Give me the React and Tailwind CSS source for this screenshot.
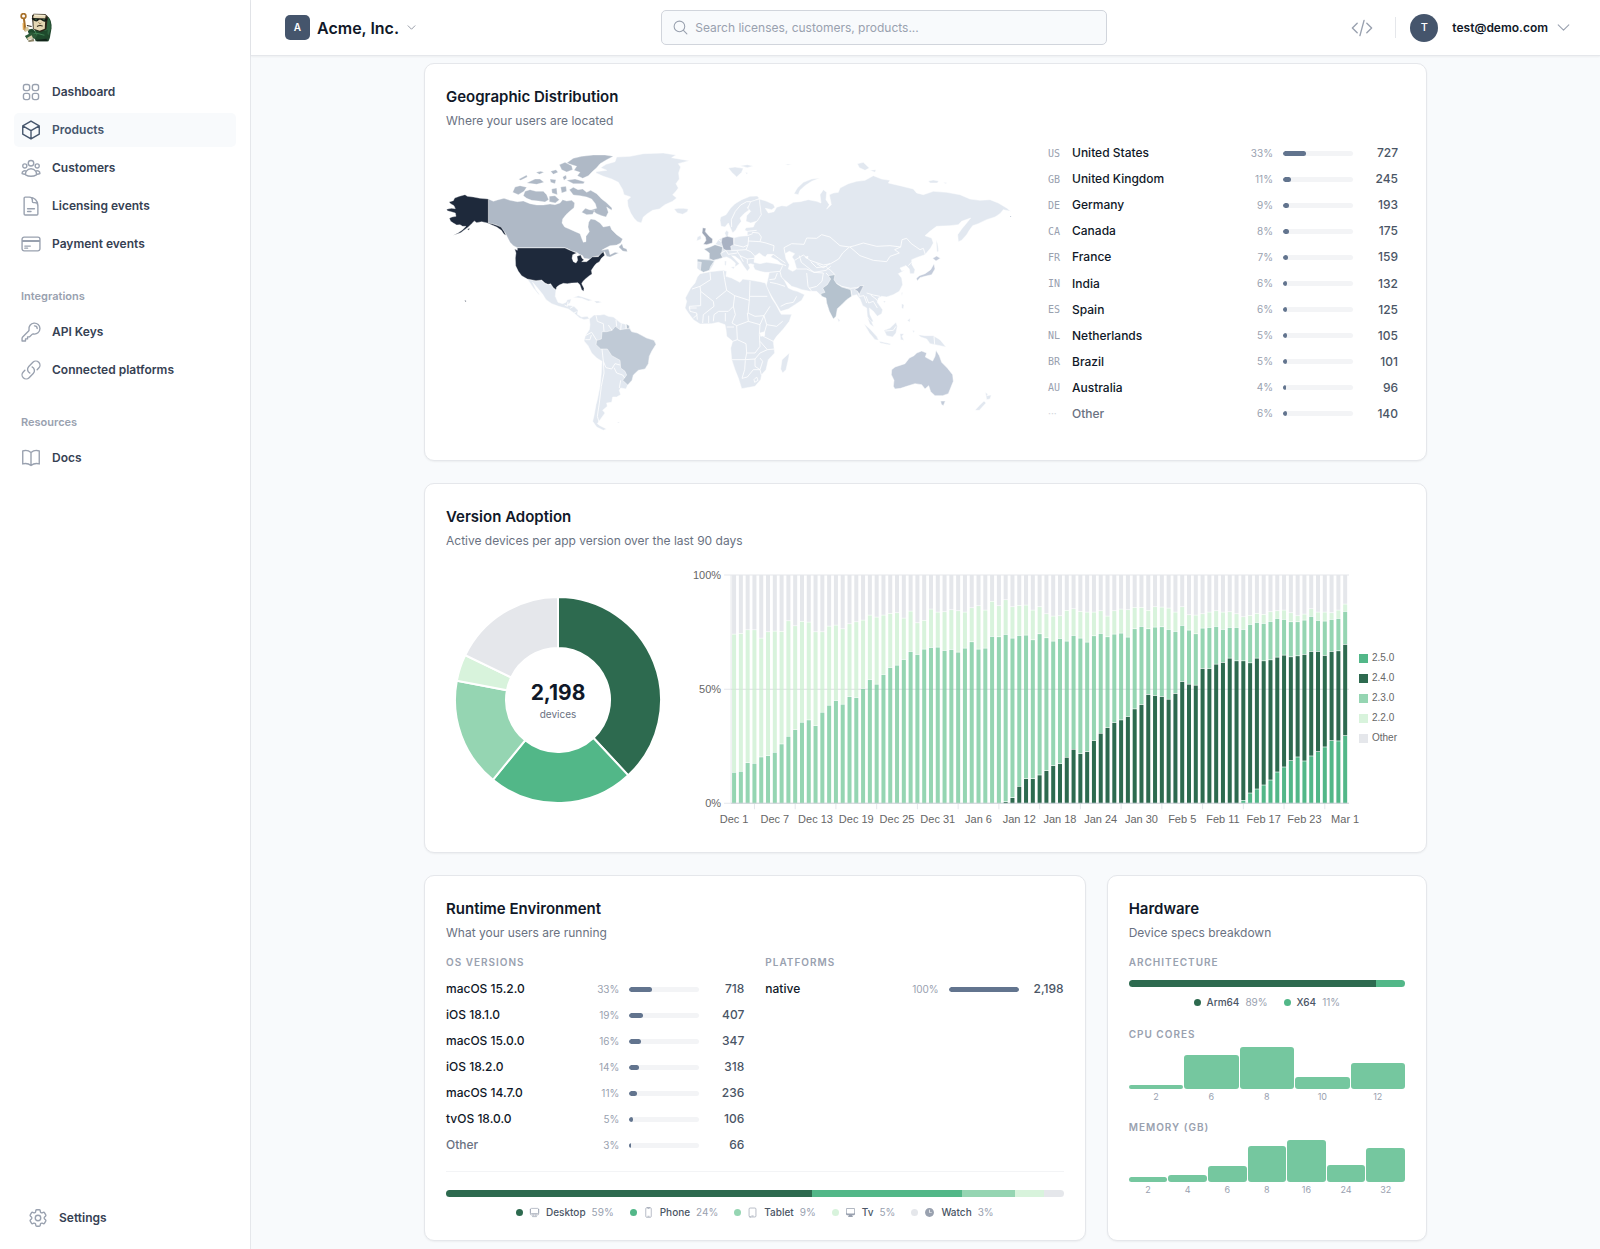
import React from "react";
import {
  HiOutlineSquares2X2,
  HiOutlineCube,
  HiOutlineUserGroup,
  HiOutlineDocumentText,
  HiOutlineCreditCard,
  HiOutlineKey,
  HiOutlineLink,
  HiOutlineBookOpen,
  HiOutlineCog6Tooth,
  HiOutlineMagnifyingGlass,
  HiOutlineCodeBracket,
  HiOutlineChevronDown,
  HiOutlineComputerDesktop,
  HiOutlineDevicePhoneMobile,
  HiOutlineDeviceTablet,
  HiComputerDesktop,
  HiClock,
} from "react-icons/hi2";

const mainNav = [
  { label: "Dashboard", Icon: HiOutlineSquares2X2 },
  { label: "Products", Icon: HiOutlineCube, active: true },
  { label: "Customers", Icon: HiOutlineUserGroup },
  { label: "Licensing events", Icon: HiOutlineDocumentText },
  { label: "Payment events", Icon: HiOutlineCreditCard },
];
const integrationNav = [
  { label: "API Keys", Icon: HiOutlineKey },
  { label: "Connected platforms", Icon: HiOutlineLink },
];
const resourceNav = [{ label: "Docs", Icon: HiOutlineBookOpen }];

const countries = [
  { code: "US", name: "United States", pct: 33, value: "727" },
  { code: "GB", name: "United Kingdom", pct: 11, value: "245" },
  { code: "DE", name: "Germany", pct: 9, value: "193" },
  { code: "CA", name: "Canada", pct: 8, value: "175" },
  { code: "FR", name: "France", pct: 7, value: "159" },
  { code: "IN", name: "India", pct: 6, value: "132" },
  { code: "ES", name: "Spain", pct: 6, value: "125" },
  { code: "NL", name: "Netherlands", pct: 5, value: "105" },
  { code: "BR", name: "Brazil", pct: 5, value: "101" },
  { code: "AU", name: "Australia", pct: 4, value: "96" },
  { code: "···", name: "Other", pct: 6, value: "140" },
];
const osVersions = [
  { name: "macOS 15.2.0", pct: 33, value: "718" },
  { name: "iOS 18.1.0", pct: 19, value: "407" },
  { name: "macOS 15.0.0", pct: 16, value: "347" },
  { name: "iOS 18.2.0", pct: 14, value: "318" },
  { name: "macOS 14.7.0", pct: 11, value: "236" },
  { name: "tvOS 18.0.0", pct: 5, value: "106" },
  { name: "Other", pct: 3, value: "66" },
];
const platforms = [{ name: "native", pct: 100, value: "2,198" }];

const devices = [
  { name: "Desktop", pct: 59, share: 59.2, color: "#2d6a4f", Icon: HiOutlineComputerDesktop },
  { name: "Phone", pct: 24, share: 24.4, color: "#52b788", Icon: HiOutlineDevicePhoneMobile },
  { name: "Tablet", pct: 9, share: 8.6, color: "#95d5b2", Icon: HiOutlineDeviceTablet },
  { name: "Tv", pct: 5, share: 4.7, color: "#d8f3dc", Icon: HiComputerDesktop },
  { name: "Watch", pct: 3, share: 3.1, color: "#e5e7eb", Icon: HiClock },
];
const architectures = [
  { name: "Arm64", pct: 89, share: 89.4, color: "#2d6a4f" },
  { name: "X64", pct: 11, share: 10.6, color: "#52b788" },
];
const cpuCores = [["2", 10], ["6", 83], ["8", 100], ["10", 30], ["12", 64]];
const memory = [["2", 12], ["4", 18], ["6", 38], ["8", 87], ["16", 100], ["24", 41], ["32", 83]];

function Logo() {
  return (
    <svg viewBox="0 0 94 86" className="h-[29px] w-[32px]" aria-label="Home" role="img">
      <path d="M58 6 L84 12 Q94 22 93 45 L88 74 L84 84 L46 84 L40 66Z" fill="#20452c" />
      <path d="M66 12 L84 15 Q92 30 90 48 L84 66 L72 52Z" fill="#2f6540" />
      <path d="M35 8 L40 2 L74 3 L82 10 L78 48 L60 56 L38 48Z" fill="#2b2518" />
      <path d="M39 8 L75 9 L73 47 L58 53 L40 47Z" fill="#e4d7b4" />
      <path d="M39 4 L73 5 L78 10 L42 9Z" fill="#f3ead0" />
      <path d="M34 15 L82 16 L80 22 Q74 28 67 24 L61 20 L56 20 Q52 27 43 24 L37 20Z" fill="#141a14" />
      <path d="M42 18 l8 1 -2 3z M66 18 l8 1 -3 3z" fill="#3f7a4f" />
      <path d="M50 40 Q58 35 67 39" fill="none" stroke="#2b2518" strokeWidth="3" />
      <path d="M54 27 l5 6 4-4" fill="none" stroke="#8a6b3f" strokeWidth="2" />
      <path d="M22 50 L36 47 L42 52 L64 58 L82 50 L80 72 L58 78 L30 72 L24 58Z" fill="#1e4a2c" />
      <path d="M28 60 L52 61 L72 66 M44 53 L50 66" stroke="#3f7f52" strokeWidth="3" fill="none" />
      <path d="M14 68 L34 58 L52 66 L44 76 L28 74 L22 80Z" fill="#2c5a38" />
      <circle cx="10" cy="9" r="7" fill="none" stroke="#a8712b" strokeWidth="5" />
      <path d="M11 16 L16 54" stroke="#a8712b" strokeWidth="6" />
      <path d="M9 30 L10 50" stroke="#e0a64d" strokeWidth="4" />
      <path d="M16 42 L24 40 L26 52 L14 56Z" fill="#d9cba5" />
      <path d="M20 37 L34 40" stroke="#2b2518" strokeWidth="3" />
      <path d="M20 74 L34 66 L38 74 L24 80Z" fill="#d8ccaa" />
      <path d="M22 82 L40 76 L42 84 L26 86Z" fill="#8c8468" />
      <path d="M48 80 L78 76 L82 84 L50 84Z" fill="#12241a" />
    </svg>
  );
}

function NavLink({ label, Icon, active }) {
  return (
    <li>
      <a
        href="#"
        aria-current={active ? "page" : undefined}
        className={
          active
            ? "flex h-[34px] items-center gap-2.5 rounded-[5px] bg-slate-50 px-1.5 text-[12px] font-semibold text-slate-600"
            : "flex h-[34px] items-center gap-2.5 rounded-[5px] px-1.5 text-[12px] font-semibold text-gray-700"
        }
      >
        <Icon className={active ? "size-[22px] text-slate-600" : "size-[22px] text-gray-400"} />
        {label}
      </a>
    </li>
  );
}

function NavSection({ title, items }) {
  return (
    <section>
      <h2 className="px-[7px] text-[11px] leading-4 font-semibold text-gray-400">{title}</h2>
      <ul className="mt-[11px] flex flex-col gap-1">
        {items.map((item) => (
          <NavLink key={item.label} {...item} />
        ))}
      </ul>
    </section>
  );
}

function Sidebar() {
  return (
    <aside className="flex w-[251px] shrink-0 flex-col border-r border-gray-200 bg-white px-3.5 pb-3.5">
      <a href="#" className="mt-[13px] ml-1.5 self-start">
        <Logo />
      </a>
      <nav className="mt-[33px] flex flex-1 flex-col gap-[27px]">
        <ul className="flex flex-col gap-1">
          {mainNav.map((item) => (
            <NavLink key={item.label} {...item} />
          ))}
        </ul>
        <NavSection title="Integrations" items={integrationNav} />
        <NavSection title="Resources" items={resourceNav} />
      </nav>
      <a href="#" className="flex h-[34px] items-center gap-2.5 px-[13px] text-[12px] font-semibold text-gray-700">
        <HiOutlineCog6Tooth className="size-[22px] text-gray-400" />
        Settings
      </a>
    </aside>
  );
}

function Header() {
  return (
    <header className="flex h-14 items-center justify-between border-b border-gray-200 bg-white pr-7 pl-[34px] shadow-xs">
      <button type="button" className="flex items-center gap-[7px] text-gray-900">
        <span className="flex size-[25px] items-center justify-center rounded-[5px] bg-slate-600 text-[10px] font-semibold text-white">
          A
        </span>
        <span className="text-base font-semibold">Acme, Inc.</span>
        <HiOutlineChevronDown className="size-[11px] text-gray-500" />
      </button>
      <div className="flex h-[35px] w-[446px] items-center gap-1.5 rounded-[5px] border border-gray-300 bg-slate-50 px-2.5">
        <HiOutlineMagnifyingGlass className="size-[17px] shrink-0 text-gray-400" />
        <input
          type="search"
          aria-label="Search"
          placeholder="Search licenses, customers, products..."
          className="h-full w-full bg-transparent text-[12px] leading-5 text-gray-900 outline-none placeholder:text-gray-400"
        />
      </div>
      <div className="flex items-center">
        <a href="#" aria-label="Developer tools" className="text-gray-400">
          <HiOutlineCodeBracket className="size-[22px]" />
        </a>
        <span className="ml-[22px] h-[21px] w-px bg-gray-200" />
        <button type="button" className="ml-3.5 flex items-center text-[12px] font-semibold text-gray-900">
          <span className="flex size-7 items-center justify-center rounded-full bg-slate-600 text-[11px] font-medium text-white">
            T
          </span>
          <span className="ml-3.5">test@demo.com</span>
          <HiOutlineChevronDown className="ml-[7px] size-[17px] text-gray-400" />
        </button>
      </div>
    </header>
  );
}

function Card({ title, subtitle, className = "", children }) {
  return (
    <section className={"rounded-[10px] border border-gray-200 bg-white px-[21px] pt-[22px] pb-5 shadow-xs " + className}>
      <h2 className="text-[15px] leading-[22px] font-semibold text-gray-900">{title}</h2>
      <p className="mt-1 text-[12px] leading-[18px] text-gray-500">{subtitle}</p>
      {children}
    </section>
  );
}

function BreakdownRow({ code, name, pct, value }) {
  const muted = name === "Other";
  return (
    <li className="flex flex-1 items-center text-[12px]">
      {code && (
        <span
          className={
            muted
              ? "w-6 text-[10px] text-gray-300"
              : "w-6 font-['DejaVu_Sans_Mono',monospace] text-[10px] text-gray-400"
          }
        >
          {code}
        </span>
      )}
      <span className={muted ? "flex-1 font-medium text-gray-500" : "flex-1 font-medium text-gray-900"}>{name}</span>
      <span className="text-[10px] text-gray-400">{pct}%</span>
      <span className="ml-2.5 h-[5px] w-[70px] overflow-hidden rounded-full bg-gray-100">
        <span className="block h-full rounded-full bg-slate-500" style={{ width: `${pct}%` }} />
      </span>
      <span className="w-[45px] text-right font-medium text-gray-600">{value}</span>
    </li>
  );
}

function SectionLabel({ children }) {
  return <h3 className="text-[10px] leading-4 font-semibold tracking-widest text-gray-400">{children}</h3>;
}

/* Country outlines in a Miller projection; the eastern half is drawn in its own group. */
const WEST_LAND = [
  // Greenland, Iceland
  "M498,96 530,92 512,84 528,74 555,66 560,52 600,50 640,42 700,40 738,46 725,54 778,63 745,72 752,82 746,100 748,118 738,132 745,145 738,155 728,165 740,175 728,185 705,195 688,208 668,212 652,222 640,232 634,250 622,246 612,236 602,220 594,200 592,182 602,172 582,165 578,150 565,128 545,118 520,110 498,100Z",
  "M732,208 745,206 760,206 775,208 772,216 758,224 742,220Z",
  // Mexico and Central America
  "M292,418 318,424 335,422 345,431 354,435 362,433 370,445 378,451 376,470 384,488 398,492 408,488 412,480 424,478 420,490 412,496 432,500 444,512 442,524 455,532 472,530 478,537 462,540 448,534 432,520 415,508 386,500 365,492 348,480 338,464 322,444 308,428 318,450 330,466 325,464 310,445 300,430Z",
  "M428,474 445,468 465,474 488,482 475,484 455,476 440,474Z",
  "M492,484 505,484 516,488 500,491Z",
  // South America
  "M478,538 492,526 510,526 522,524 535,530 550,532 558,538 572,550 595,556 605,575 622,580 650,595 672,602 678,614 665,635 658,650 655,672 645,688 625,692 610,706 606,722 593,736 588,748 572,745 568,752 572,765 560,772 548,772 545,788 530,790 532,800 518,812 525,820 512,838 502,852 510,858 530,868 520,872 500,862 488,845 492,828 498,795 502,780 510,740 514,700 516,665 500,655 485,640 474,618 462,604 466,588 478,570 480,555Z",
  "M560,847 570,847 566,850Z",
];
const CANADA = [
  "M175,178 190,185 205,180 222,176 240,182 262,186 280,184 300,192 320,196 340,196 360,193 375,195 390,190 398,180 410,184 425,182 434,190 432,204 420,214 408,225 398,238 396,250 404,262 418,268 436,276 450,282 455,296 460,308 468,306 468,290 478,276 474,262 476,248 482,238 495,240 510,250 520,262 540,258 545,270 560,285 578,298 572,310 560,316 540,318 525,326 515,332 535,328 538,336 540,345 555,338 566,340 540,352 530,350 524,336 515,340 508,348 490,352 478,358 462,356 458,348 448,344 440,338 425,334 415,328 405,324 262,324 250,318 240,308 232,292 226,280 215,266 200,256 175,250Z",
  "M566,322 576,312 580,324 590,328 592,336 578,334Z",
  "M418,150 430,143 444,150 458,148 470,158 482,152 500,162 515,178 528,188 546,205 545,212 530,202 535,218 528,232 515,228 500,222 492,216 484,210 500,206 496,192 485,178 470,172 450,168 430,166Z",
  "M285,155 300,150 318,155 340,155 350,165 356,180 345,187 325,184 305,182 290,176 280,168Z",
  "M255,142 270,138 290,143 282,155 265,165 248,158Z",
  "M410,70 430,56 455,50 490,46 525,46 550,50 530,60 510,72 500,84 488,95 475,108 458,116 442,108 450,98 432,92 440,80 425,75Z",
  "M388,75 405,68 425,78 428,90 410,97 395,90Z",
  "M410,122 435,118 464,126 460,132 430,132Z",
  "M360,118 378,120 375,132 362,128Z",
  "M290,130 315,118 330,118 342,128 320,134Z",
  "M266,119 290,106 292,112 272,122Z",
  "M318,98 332,95 342,98 328,104Z",
  "M362,95 378,90 384,98 370,104Z",
  "M392,142 408,140 410,155 395,160Z",
  "M365,148 380,145 382,165 366,160Z",
  "M358,170 375,168 388,180 376,190 358,186Z",
  "M455,218 466,206 478,210 494,212 488,224 470,225Z",
  "M398,112 408,106 410,116 402,122Z",
];
const USA = [
  "M57,187 70,183 74,175 88,170 105,165 112,170 130,172 150,176 175,178 175,250 186,252 200,257 213,262 222,275 228,287 222,284 214,272 200,262 186,256 172,250 155,246 140,249 133,244 125,252 115,262 104,270 92,279 70,287 85,279 98,270 108,260 98,260 90,255 80,256 70,250 62,245 58,236 66,232 78,230 76,220 66,217 52,213 50,209 64,206 76,207 72,198 62,192Z",
  "M112,268 120,266 116,272Z",
  "M262,325 405,325 418,331 430,336 440,340 428,345 426,356 430,366 438,370 443,362 441,350 452,346 456,356 462,360 455,366 470,366 480,358 487,352 505,351 512,343 520,336 524,347 514,356 508,366 498,372 492,380 484,392 486,403 478,408 466,418 458,426 455,432 462,446 461,455 455,450 450,436 444,429 425,430 412,432 400,431 388,436 380,442 378,450 370,444 362,432 354,434 345,430 335,421 318,423 292,418 275,408 265,395 257,378 256,355 258,340 254,328 262,332Z",
  "M104,482 109,484 106,487Z",
];
const BRAZIL =
  "M546,572 556,560 570,570 598,566 605,576 622,580 650,595 672,602 678,614 665,635 658,650 655,672 645,688 625,692 610,706 606,722 593,736 578,722 590,706 585,695 572,685 570,662 545,648 532,628 512,628 498,615 500,602 514,598 516,576 530,576Z";
const WEST_BORDERS =
  "M498,527 502,545 520,552 522,575 M535,556 546,572 M558,540 560,560 M574,552 572,570 M588,555 588,568 M466,588 485,578 500,602 M466,600 480,600 484,586 M516,628 520,665 528,684 545,688 555,672 570,676 M520,665 522,700 514,740 508,790 502,830 510,856 M552,684 560,700 578,706 584,715 M572,722 568,745 M404,496 412,500 414,486 M420,506 430,500 M440,516 432,520";
const EAST_LAND = [
  // Scandinavia and Finland
  "M180,242 182,232 198,225 212,205 225,192 245,180 270,170 292,169 298,176 285,182 272,186 268,196 262,204 268,210 252,222 240,235 244,245 234,258 228,270 218,280 210,262 205,250 195,262 183,260Z",
  "M268,196 272,186 285,182 298,178 300,195 304,225 292,244 272,250 258,245 260,228 272,215 264,206Z",
  // Mainland Eurasia
  "M298,178 318,184 340,194 345,203 335,210 316,206 325,220 342,216 350,203 365,198 380,200 400,188 420,186 445,180 470,185 483,190 480,165 490,150 500,158 498,180 508,195 500,208 514,195 508,165 520,160 535,158 540,145 565,132 590,125 615,122 640,108 665,118 690,122 685,130 720,138 760,148 770,160 790,165 820,155 860,158 900,165 930,178 960,182 990,180 1015,190 1040,205 1052,215 1030,210 1020,222 1005,232 980,240 955,252 938,258 928,272 920,285 905,302 895,306 893,285 905,268 920,250 932,235 905,245 895,255 870,258 830,260 810,275 795,288 815,295 820,310 812,325 795,345 775,352 755,360 756,375 765,390 762,402 750,402 748,388 738,378 720,385 725,393 734,392 715,402 725,415 728,435 718,455 700,465 680,472 665,470 655,475 652,488 668,510 665,522 652,530 640,515 628,505 630,525 640,545 632,550 622,530 620,505 608,498 600,478 590,465 572,470 560,480 545,495 532,507 528,530 520,538 508,515 500,490 498,475 485,470 470,455 450,455 425,450 412,445 395,440 382,428 372,420 385,445 400,452 412,455 434,465 425,482 405,495 385,508 362,515 350,495 335,470 318,440 322,425 328,398 315,398 300,395 285,390 280,380 282,375 272,372 265,374 270,385 262,395 250,378 240,362 225,350 215,348 228,362 238,372 225,382 226,370 212,358 200,352 188,354 180,358 165,362 160,375 150,392 130,398 118,392 111,386 112,358 146,359 148,340 132,328 150,322 165,315 175,300 186,295 198,290 194,280 200,272 206,278 204,290 222,294 240,290 262,288 262,275 254,272 258,264 280,262 285,250 292,244 304,225Z",
  // Ireland
  "M112,292 122,287 124,298 110,304Z",
  // Arctic islands
  "M402,162 412,145 430,128 455,118 480,115 455,125 435,138 420,152 415,165Z",
  "M205,85 225,82 250,86 245,98 230,112 215,98Z",
  "M240,78 262,75 280,79 262,84Z",
  "M256,98 264,100 260,104Z",
  "M592,72 610,68 628,85 615,92 598,84Z",
  "M630,92 648,90 645,98Z",
  "M805,124 820,121 836,124 832,130 810,130Z",
  "M850,128 862,129 856,132Z",
  "M375,74 395,73 384,77Z",
  // Mediterranean islands
  "M194,364 199,364 198,378 194,376Z",
  "M212,382 224,381 221,388Z",
  // Sakhalin, Sri Lanka, Taiwan, Hainan
  "M828,300 833,312 836,334 831,338Z",
  "M532,534 540,542 536,548Z",
  "M724,460 728,458 726,468Z",
  "M670,484 677,484 673,490Z",
  // Africa and Madagascar
  "M120,402 150,396 190,392 200,395 198,410 215,415 240,428 248,418 275,422 300,426 316,430 322,445 335,475 348,495 360,518 364,524 395,524 388,545 370,568 350,590 340,605 344,640 325,660 318,690 305,705 302,720 285,740 245,747 235,715 225,690 215,660 212,625 218,605 200,590 198,570 195,555 175,548 155,552 120,553 100,540 85,520 75,505 80,485 76,475 92,445 105,430 112,412Z",
  "M388,640 386,655 378,690 368,700 362,688 366,660Z",
  // South-east Asia and Oceania
  "M612,552 630,568 650,590 656,602 645,600 628,580Z",
  "M622,535 634,545 642,562 630,554Z",
  "M658,605 692,612 690,616 660,610Z",
  "M672,572 690,565 708,548 712,560 708,580 698,592 680,588Z",
  "M720,582 732,582 726,590 732,602 722,600Z",
  "M725,492 732,495 730,508 725,505Z",
  "M742,542 751,536 749,548Z",
  "M775,585 795,588 820,588 840,600 858,622 840,618 825,615 810,612 800,598 782,592Z",
  "M758,572 764,574 760,580Z",
  "M980,768 994,766 990,778 980,780 976,758 984,764Z",
  "M972,784 978,790 958,812 945,812 960,795Z",
];
const INLAND_SEAS =
  "M282,368 284,350 298,340 308,348 316,352 322,344 340,344 332,352 352,362 368,376 350,372 320,368 300,372Z M375,342 388,335 404,342 396,352 402,360 410,388 398,395 385,388 388,375 378,358Z M300,580 314,576 314,588 302,590Z M436,352 444,350 442,358Z";
const EAST_BORDERS = [
  // Northern and Central Europe
  "M215,262 214,240 226,215 242,196 260,186 272,186 M222,294 221,315 234,318 250,322 264,316 266,292 M264,304 300,306 304,292 296,280 276,278 M262,275 290,272 M262,288 278,282 M300,306 318,310 342,318 340,335 M264,316 258,330 272,336 285,350 M212,332 230,332 258,330 M198,332 205,344 232,340 M230,332 240,348 262,358 282,356 M240,348 250,366 M262,358 262,372 M165,314 188,322 M184,340 198,332 M175,300 184,306",
  // Russia's southern edge
  "M340,344 356,356 376,370 M375,342 372,324 395,312 432,314 440,295 470,296 485,285 510,292 540,318 568,322 584,318 610,310 650,320 690,318 722,322 726,300 740,296 754,312 780,330 790,326 796,345",
  "M568,322 548,340 536,358 512,372 M570,322 600,348 640,362 680,366 690,350 718,340 704,330 722,322",
  "M404,362 430,346 450,362 490,376 512,372 M418,348 424,368 452,390 462,398 M452,366 470,384 500,380 M470,372 490,384 510,372",
  "M410,388 440,388 462,398 498,392 512,380 M440,400 444,440 455,455 M462,398 490,400 486,425 470,440 448,446 M498,400 506,408",
  "M525,405 512,392 500,384 M530,432 545,440 572,446 590,444 610,438 M572,450 576,468 M592,446 598,470 612,468 620,490 M618,470 626,490 640,485 652,505 M632,466 648,478 656,488 M620,460 640,466 660,470",
  // Middle East
  "M328,398 360,395 368,378 M362,372 378,378 M360,395 364,412 372,420 M328,420 345,418 352,400 M330,428 350,432 375,440 M362,500 378,492 400,488 M400,488 410,470 M745,388 738,378 M745,378 756,366",
  // Africa
  "M150,398 152,420 120,440 96,448 M120,440 122,455 160,485 162,500 M122,455 122,498 88,500 M190,394 194,420 200,452 168,478 M200,452 224,468 268,482 270,424 M224,468 220,500 205,515 176,515 162,525 160,545 M270,470 322,470 M268,482 264,520 285,530 312,528 330,500 M220,500 226,525 216,550 230,558 265,545 262,520 M130,525 162,500 M88,500 90,515 110,520 112,540 M130,525 128,550 M146,528 146,550 M312,528 320,555 350,560 368,545 M320,555 310,590 340,605 M265,545 300,555 312,528 M230,558 232,600 218,605 M232,600 258,612 260,640 285,640 M260,640 256,660 215,660 M256,660 285,658 300,640 322,630 M285,640 300,620 298,585 300,555 M300,605 322,630 344,628 M256,662 254,690 246,716 262,712 280,690 300,690 M285,658 285,680 300,690 308,665 300,655 M282,720 290,712 294,722 284,728Z M300,690 304,706 M200,562 222,562 M86,505 110,505 M100,535 112,525 M196,520 196,545",
  "M822,590 824,614 M676,574 700,572 708,560",
];
const GB = "M128,264 138,266 136,276 148,290 158,298 157,310 140,315 130,314 138,302 136,292 126,280Z";
const DE = "M186,295 202,290 220,294 221,315 212,320 214,332 198,332 190,328 188,322 184,308Z";
const FR = "M132,328 150,322 165,315 188,322 186,335 182,342 188,354 175,358 160,362 148,357 148,340Z";
const ES = "M112,358 150,361 163,364 152,380 148,392 130,398 121,392 124,368 112,366Z";
const IN_ =
  "M505,408 525,405 522,420 530,432 545,442 572,450 575,470 560,480 545,495 532,507 528,530 520,538 508,515 500,490 498,475 485,470 482,462 495,458 488,445 502,435 512,418Z";
const IN_EAST = "M583,450 595,444 600,438 611,438 605,450 598,464 592,454Z";
const JP = "M818,356 830,349 841,356 828,364Z M822,372 825,388 815,405 795,410 780,414 772,424 769,416 778,408 795,402 812,390Z";
const AU =
  "M695,690 705,682 735,672 748,655 762,648 770,640 785,634 800,640 796,652 818,664 825,650 828,632 838,648 845,668 862,685 878,705 880,725 865,762 848,768 825,768 812,756 806,738 795,748 785,735 765,732 740,740 722,746 705,748 700,740 702,722 694,705Z M842,784 856,784 850,798 844,794Z";

function WorldMap() {
  return (
    <svg viewBox="48 1 1719 900" className="w-full" role="img" aria-label="World map of users by country">
      <g stroke="#ffffff" strokeWidth="1.5" strokeLinejoin="round">
        <g fill="#e2e8f0">
          {WEST_LAND.map((d) => (
            <path key={d} d={d} />
          ))}
        </g>
        <g fill="#afb9c6">
          {CANADA.map((d) => (
            <path key={d} d={d} strokeWidth="1" />
          ))}
        </g>
        <path d={BRAZIL} fill="#c0cad6" />
        <path d="M588,553 598,558 597,567 590,567Z" fill="#b4bfcb" />
        <path d={WEST_BORDERS} fill="none" strokeWidth="2.5" />
        <g fill="#1e293b" strokeWidth="1">
          {USA.map((d) => (
            <path key={d} d={d} />
          ))}
        </g>
      </g>
      <g transform="translate(690 0)" stroke="#ffffff" strokeWidth="1.5" strokeLinejoin="round">
        <g fill="#e2e8f0">
          {EAST_LAND.map((d) => (
            <path key={d} d={d} />
          ))}
        </g>
        <path d={INLAND_SEAS} fill="#ffffff" />
        <g fill="none" strokeWidth="2.5">
          {EAST_BORDERS.map((d) => (
            <path key={d} d={d} />
          ))}
        </g>
        <path d={GB} fill="#9ea7b7" />
        <path d={DE} fill="#a9b2c3" />
        <path d={FR} fill="#b1bcc9" />
        <path d={ES} fill="#b9c5d1" />
        <path d={IN_} fill="#b5c2ce" />
        <path d={IN_EAST} fill="#b5bfce" />
        <path d={JP} fill="#c4ccdb" />
        <path d={AU} fill="#c2cbd9" />
        <path d="M1050,229 1054,230 1052,232Z" fill="#94a3b8" strokeWidth="0" />
      </g>
    </svg>
  );
}

const donut = [
  { from: 0, to: 137, color: "#2d6a4f" },
  { from: 137, to: 219.2, color: "#52b788" },
  { from: 219.2, to: 280.8, color: "#95d5b2" },
  { from: 280.8, to: 295.8, color: "#d8f3dc" },
  { from: 295.8, to: 360, color: "#e5e7eb" },
];

function arcPath({ from, to }) {
  const at = (r, deg) => {
    const a = ((deg - 90) * Math.PI) / 180;
    return `${(r * Math.cos(a)).toFixed(2)},${(r * Math.sin(a)).toFixed(2)}`;
  };
  const large = to - from > 180 ? 1 : 0;
  return `M${at(103, from)} A103,103 0 ${large} 1 ${at(103, to)} L${at(52, to)} A52,52 0 ${large} 0 ${at(52, from)}Z`;
}

function Donut() {
  return (
    <div className="grid w-[224px] shrink-0 place-items-center pt-1">
      <svg viewBox="-104 -104 208 208" className="col-start-1 row-start-1 w-[208px]" role="img" aria-label="Devices by version">
        {donut.map((s) => (
          <path key={s.from} d={arcPath(s)} fill={s.color} stroke="#ffffff" strokeWidth="2" />
        ))}
      </svg>
      <div className="col-start-1 row-start-1 pt-0.5 text-center">
        <div className="text-[21px] leading-[26px] font-bold text-gray-900">2,198</div>
        <div className="text-[10px] leading-4 text-gray-500">devices</div>
      </div>
    </div>
  );
}

/* Cumulative share tops per day: 46 is the 100% line, 730 the 0% line. */
const TOP_22 = [
  224, 222, 211, 211, 236, 217, 215, 216, 184, 199, 186, 188, 217, 217, 200, 197, 208, 193, 187, 182, 167, 173, 167, 162, 160, 176, 155,
  190, 183, 149, 158, 157, 151, 154, 158, 145, 139, 152, 126, 139, 121, 142, 138, 137, 152, 142, 163, 170, 169, 153, 148, 156, 158, 158,
  154, 170, 154, 149, 151, 144, 144, 153, 142, 143, 146, 158, 142, 166, 167, 163, 158, 154, 158, 157, 163, 172, 168, 162, 165, 157, 154,
  152, 160, 169, 164, 148, 158, 158, 160, 152, 134,
];
const TOP_23 = [
  638, 635, 609, 611, 592, 588, 578, 553, 530, 510, 488, 481, 498, 458, 437, 423, 434, 411, 414, 387, 360, 374, 345, 324, 317, 300, 276,
  285, 269, 264, 263, 273, 270, 278, 266, 247, 269, 266, 231, 232, 225, 236, 228, 227, 241, 223, 235, 245, 237, 245, 228, 236, 248, 229,
  222, 232, 224, 221, 233, 208, 201, 208, 203, 202, 210, 216, 198, 212, 223, 206, 204, 201, 210, 204, 204, 210, 195, 189, 192, 186, 177,
  180, 187, 187, 182, 171, 183, 185, 180, 177, 156,
];
const TOP_24 = [
  726, 714, 680, 657, 657, 646, 633, 618, 612, 593, 569, 582, 576, 543, 521, 504, 489, 481, 471, 448, 435, 405, 408, 411, 419, 402, 366,
  374, 377, 327, 327, 314, 309, 296, 304, 304, 310, 296, 304, 301, 293, 287, 292, 289, 285, 276, 276, 288, 276, 274, 255,
];
const TOP_25 = [722, 700, 688, 676, 661, 637, 622, 603, 592, 604, 589, 576, 562, 543, 544, 528];
const DAYS = TOP_22.length;
const DATE_LABELS = [
  "Dec 1", "Dec 7", "Dec 13", "Dec 19", "Dec 25", "Dec 31", "Jan 6", "Jan 12",
  "Jan 18", "Jan 24", "Jan 30", "Feb 5", "Feb 11", "Feb 17", "Feb 23", "Mar 1",
];

const PLOT_TOP = 10;
const PLOT_BOTTOM = 238;
const SEGMENT_GAP = 0.6;
const dayX = (i) => 44 + i * 6.78;
const topY = (v) => PLOT_TOP + (v - 46) / 3;

function AdoptionChart() {
  const bars = [];
  for (let i = 0; i < DAYS; i++) {
    const t22 = topY(TOP_22[i]);
    const t23 = topY(TOP_23[i]);
    const t24 = i >= 40 ? topY(TOP_24[i - 40]) : PLOT_BOTTOM;
    const t25 = i >= 75 ? topY(TOP_25[i - 75]) : PLOT_BOTTOM;
    const parts = [
      [PLOT_TOP, t22, "#e5e7eb"],
      [t22, t23, "#d8f3dc"],
      [t23, t24, "#95d5b2"],
      [t24, t25, "#2d6a4f"],
      [t25, PLOT_BOTTOM, "#52b788"],
    ];
    parts.forEach(([a, b, color]) => {
      const height = b < PLOT_BOTTOM ? b - a - SEGMENT_GAP : b - a;
      if (height > 0) bars.push(<rect key={`${i}${color}`} x={dayX(i) - 2} y={a} width="4" height={height} fill={color} />);
    });
  }
  return (
    <svg viewBox="0 0 668 266" className="min-w-0 flex-1 overflow-visible" role="img" aria-label="Version share per day">
      <g stroke="#e5e7eb" strokeWidth="1">
        <path d="M34,10 H658 M34,124 H658 M34,238 H658 M41,10 V238" fill="none" />
        {Array.from({ length: 15 }, (_, k) => (
          <path key={k} d={`M${dayX(3 + k * 6)},238 v6`} />
        ))}
      </g>
      {bars}
      <path d="M41,124 H658" stroke="#000000" strokeOpacity="0.04" />
      <path d="M41,238 H658" stroke="#d1d5db" />
      <g fill="#666666" fontSize="11" fontFamily="'Liberation Sans', Arial, sans-serif">
        <text x="31" y="14" textAnchor="end">100%</text>
        <text x="31" y="128" textAnchor="end">50%</text>
        <text x="31" y="242" textAnchor="end">0%</text>
        {DATE_LABELS.map((label, k) => (
          <text key={label} x={dayX(k * 6)} y="258" textAnchor="middle">
            {label}
          </text>
        ))}
      </g>
    </svg>
  );
}

const versionLegend = [
  ["2.5.0", "#52b788"],
  ["2.4.0", "#2d6a4f"],
  ["2.3.0", "#95d5b2"],
  ["2.2.0", "#d8f3dc"],
  ["Other", "#e5e7eb"],
];

function ShareBar({ items }) {
  return (
    <div className="flex h-[7px] overflow-hidden rounded-full">
      {items.map((d) => (
        <span key={d.name} style={{ width: `${d.share}%`, backgroundColor: d.color }} />
      ))}
    </div>
  );
}

function ShareLegend({ items }) {
  return (
    <ul className="mt-[7px] flex justify-center gap-4 text-[10px] leading-4">
      {items.map(({ name, pct, color, Icon }) => (
        <li key={name} className="flex items-center gap-1.5">
          <span className="size-[7px] rounded-full" style={{ backgroundColor: color }} />
          {Icon && <Icon className="size-[11px] text-gray-400" />}
          <span className="font-medium text-gray-600">{name}</span>
          <span className="text-gray-400">{pct}%</span>
        </li>
      ))}
    </ul>
  );
}

function Histogram({ data }) {
  return (
    <div className="mt-[5px] flex gap-px text-center text-[9px] leading-[14px] text-gray-400">
      {data.map(([label, height]) => (
        <div key={label} className="flex-1">
          <div className="flex h-[42px] items-end">
            <div className="w-full rounded-[3px] bg-[#75c79f]" style={{ height: `${height}%` }} />
          </div>
          <div className="mt-px">{label}</div>
        </div>
      ))}
    </div>
  );
}

export default function App() {
  return (
    <div className="flex min-h-screen bg-white font-['Inter',sans-serif] text-gray-900">
      <Sidebar />
      <div className="flex min-w-0 flex-1 flex-col bg-slate-50">
        <Header />
        <main className="mx-auto flex w-full max-w-[1003px] flex-col gap-[22px] pt-[7px] pb-2">
          <Card title="Geographic Distribution" subtitle="Where your users are located">
            <div className="mt-2.5 flex items-start gap-[21px]">
              <div className="min-w-0 flex-1">
                <WorldMap />
              </div>
              <ul className="flex h-[287px] w-[365px] shrink-0 flex-col pr-[7px] pl-2">
                {countries.map((row) => (
                  <BreakdownRow key={row.name} {...row} />
                ))}
              </ul>
            </div>
          </Card>

          <Card title="Version Adoption" subtitle="Active devices per app version over the last 90 days">
            <div className="mt-[15px] flex items-stretch pb-px">
              <Donut />
              <div className="ml-5 flex min-w-0 flex-1 items-center">
                <AdoptionChart />
                <ul className="flex w-[46px] shrink-0 flex-col gap-1 font-['Liberation_Sans',Arial,sans-serif] text-[10px] leading-4 text-[#666666]">
                  {versionLegend.map(([label, color]) => (
                    <li key={label} className="flex items-center gap-1">
                      <span className="size-[9px]" style={{ backgroundColor: color }} />
                      {label}
                    </li>
                  ))}
                </ul>
              </div>
            </div>
          </Card>

          <div className="grid grid-cols-3 gap-[21px]">
            <Card title="Runtime Environment" subtitle="What your users are running" className="col-span-2">
              <div className="mt-3 grid grid-cols-2 gap-[21px]">
                <div>
                  <SectionLabel>OS VERSIONS</SectionLabel>
                  <ul className="mt-1.5 flex h-[182px] flex-col">
                    {osVersions.map((row) => (
                      <BreakdownRow key={row.name} {...row} />
                    ))}
                  </ul>
                </div>
                <div>
                  <SectionLabel>PLATFORMS</SectionLabel>
                  <ul className="mt-1.5 flex h-[26px] flex-col">
                    {platforms.map((row) => (
                      <BreakdownRow key={row.name} {...row} />
                    ))}
                  </ul>
                </div>
              </div>
              <div className="mt-[13px] border-t border-gray-100 pt-[18px]">
                <ShareBar items={devices} />
                <ShareLegend items={devices} />
              </div>
            </Card>

            <Card title="Hardware" subtitle="Device specs breakdown">
              <div className="mt-3">
                <SectionLabel>ARCHITECTURE</SectionLabel>
                <div className="mt-2.5">
                  <ShareBar items={architectures} />
                  <ShareLegend items={architectures} />
                </div>
              </div>
              <div className="mt-4">
                <SectionLabel>CPU CORES</SectionLabel>
                <Histogram data={cpuCores} />
              </div>
              <div className="mt-[15px]">
                <SectionLabel>MEMORY (GB)</SectionLabel>
                <Histogram data={memory} />
              </div>
            </Card>
          </div>
        </main>
      </div>
    </div>
  );
}
